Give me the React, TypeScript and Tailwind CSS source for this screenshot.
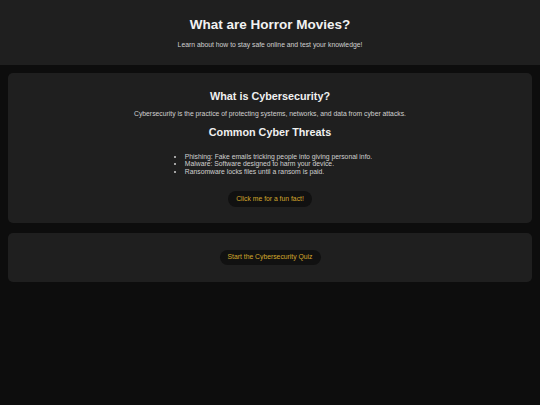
const threats = [
  'Phishing: Fake emails tricking people into giving personal info.',
  'Malware: Software designed to harm your device.',
  'Ransomware locks files until a ransom is paid.',
];

const App = () => {
  return (
    <div className="min-h-[405px] bg-[#0d0d0d] text-[#e6e6e6] font-['Liberation_Sans',Arial,sans-serif]">
      <header className="h-[65px] bg-[#1f1f1f] flex flex-col items-center pt-[16px]">
        <h1 className="text-[13.5px] leading-[18px] font-bold text-[#f2f2f2]">What are Horror Movies?</h1>
        <p className="mt-[7px] text-[6.8px] leading-[8px] text-[#d0d0d0]">
          Learn about how to stay safe online and test your knowledge!
        </p>
      </header>

      <main className="px-[8px] pt-[8px] flex flex-col gap-[10px]">
        <section className="h-[150px] bg-[#1f1f1f] rounded-[5px] flex flex-col items-center pt-[16px]">
          <h2 className="text-[10.8px] leading-[14px] font-bold text-[#f0f0f0]">What is Cybersecurity?</h2>
          <p className="mt-[7px] text-[6.8px] leading-[8px] text-[#d0d0d0]">
            Cybersecurity is the practice of protecting systems, networks, and data from cyber attacks.
          </p>
          <h2 className="mt-[6.6px] text-[10.8px] leading-[14px] font-bold text-[#f0f0f0]">Common Cyber Threats</h2>
          <ul className="mt-[14px] list-disc pl-[17px] text-[6.8px] leading-[7.8px] text-[#d0d0d0]">
            {threats.map((t) => (
              <li key={t}>{t}</li>
            ))}
          </ul>
          <button className="mt-[15.5px] h-[15.7px] px-[8px] rounded-full bg-[#111111] text-[6.8px] text-[#d4a72c]">
            Click me for a fun fact!
          </button>
        </section>

        <section className="h-[49px] bg-[#1f1f1f] rounded-[5px] flex items-center justify-center">
          <button className="h-[15.7px] px-[8px] rounded-full bg-[#111111] text-[6.8px] text-[#d4a72c]">
            Start the Cybersecurity Quiz
          </button>
        </section>
      </main>
    </div>
  );
};

export default App;
